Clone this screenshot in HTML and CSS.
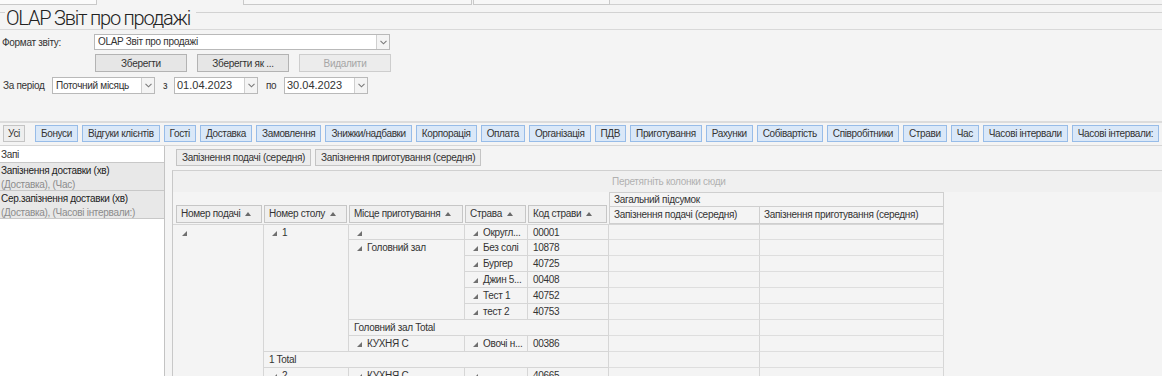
FILE: index.html
```html
<!DOCTYPE html>
<html lang="uk">
<head>
<meta charset="utf-8">
<title>OLAP Звіт про продажі</title>
<link rel="stylesheet" href="styles.css">
</head>
<body>
<div class="doc-tabs">
  <div class="doc-tab dt1"></div>
  <div class="doc-tab dt2"></div>
  <div class="doc-tab dt3"></div>
  <div class="doc-tabs-rest"></div>
</div>

<div class="title-row">
  <div class="title-line lead"></div>
  <div class="title">OLAP Звіт про продажі</div>
  <div class="title-line fill"></div>
</div>

<div class="form">
  <div class="frow frow-format">
    <div class="flabel flabel-format">Формат звіту:</div>
    <div class="combo combo-format">
      <div class="combo-val">OLAP Звіт про продажі</div>
      <div class="combo-arr"><svg width="7" height="5" viewBox="0 0 7 5"><path d="M0.5 0.8 L3.5 3.8 L6.5 0.8" fill="none" stroke="#7a7a7a" stroke-width="1.1"/></svg></div>
    </div>
  </div>
  <div class="frow frow-buttons">
    <button class="btn">Зберегти</button>
    <button class="btn">Зберегти як ...</button>
    <button class="btn btn-disabled">Видалити</button>
  </div>
  <div class="frow frow-period">
    <div class="flabel flabel-period">За період</div>
    <div class="combo combo-period">
      <div class="combo-val">Поточний місяць</div>
      <div class="combo-arr"><svg width="7" height="5" viewBox="0 0 7 5"><path d="M0.5 0.8 L3.5 3.8 L6.5 0.8" fill="none" stroke="#7a7a7a" stroke-width="1.1"/></svg></div>
    </div>
    <div class="flabel flabel-from">з</div>
    <div class="combo combo-date">
      <div class="combo-val date">01.04.2023</div>
      <div class="combo-arr"><svg width="7" height="5" viewBox="0 0 7 5"><path d="M0.5 0.8 L3.5 3.8 L6.5 0.8" fill="none" stroke="#7a7a7a" stroke-width="1.1"/></svg></div>
    </div>
    <div class="flabel flabel-to">по</div>
    <div class="combo combo-date combo-date2">
      <div class="combo-val date">30.04.2023</div>
      <div class="combo-arr"><svg width="7" height="5" viewBox="0 0 7 5"><path d="M0.5 0.8 L3.5 3.8 L6.5 0.8" fill="none" stroke="#7a7a7a" stroke-width="1.1"/></svg></div>
    </div>
  </div>
</div>

<div class="toolbar">
  <button class="tb tb-all">Усі</button>
  <div class="tb-group">
    <button class="tb">Бонуси</button>
    <button class="tb">Відгуки клієнтів</button>
    <button class="tb">Гості</button>
    <button class="tb">Доставка</button>
    <button class="tb">Замовлення</button>
    <button class="tb">Знижки/надбавки</button>
    <button class="tb">Корпорація</button>
    <button class="tb">Оплата</button>
    <button class="tb">Організація</button>
    <button class="tb">ПДВ</button>
    <button class="tb">Приготування</button>
    <button class="tb">Рахунки</button>
    <button class="tb">Собівартість</button>
    <button class="tb">Співробітники</button>
    <button class="tb">Страви</button>
    <button class="tb">Час</button>
    <button class="tb">Часові інтервали</button>
    <button class="tb">Часові інтервали:</button>
  </div>
</div>

<div class="bottom">
  <aside class="fields">
    <div class="field-search">Запі</div>
    <div class="field-item">
      <div class="fi-name">Запізнення доставки (хв)</div>
      <div class="fi-sub">(Доставка), (Час)</div>
    </div>
    <div class="field-item">
      <div class="fi-name">Сер.запізнення доставки (хв)</div>
      <div class="fi-sub">(Доставка), (Часові інтервали:)</div>
    </div>
  </aside>

  <main class="main">
    <div class="data-fields">
      <div class="dfield">Запізнення подачі (середня)</div>
      <div class="dfield">Запізнення приготування (середня)</div>
    </div>
    <div class="pivot-box">
      <div class="drag-area">
        <div class="drag-hint">Перетягніть колонки сюди</div>
      </div>
      <div class="pivot">
        <div class="hcell hfirst">Номер подачі<span class="sort"></span></div>
        <div class="hcell">Номер столу<span class="sort"></span></div>
        <div class="hcell">Місце приготування<span class="sort"></span></div>
        <div class="hcell">Страва<span class="sort"></span></div>
        <div class="hcell">Код страви<span class="sort"></span></div>
        <div class="vh vh-total">Загальний підсумок</div>
        <div class="vh">Запізнення подачі (середня)</div>
        <div class="vh">Запізнення приготування (середня)</div>

        <div class="c rs10 first top"><span class="ex"></span></div>
        <div class="c rs8 top"><span class="ex"></span>1</div>
        <div class="c top"><span class="ex"></span></div>
        <div class="c top"><span class="ex"></span>Округл...</div>
        <div class="c code top">00001</div>
        <div class="v top"></div><div class="v top"></div>

        <div class="c rs5"><span class="ex"></span>Головний зал</div>
        <div class="c"><span class="ex"></span>Без солі</div>
        <div class="c code">10878</div>
        <div class="v"></div><div class="v"></div>

        <div class="c"><span class="ex"></span>Бургер</div>
        <div class="c code">40725</div>
        <div class="v"></div><div class="v"></div>

        <div class="c"><span class="ex"></span>Джин 5...</div>
        <div class="c code">00408</div>
        <div class="v"></div><div class="v"></div>

        <div class="c"><span class="ex"></span>Тест 1</div>
        <div class="c code">40752</div>
        <div class="v"></div><div class="v"></div>

        <div class="c"><span class="ex"></span>тест 2</div>
        <div class="c code">40753</div>
        <div class="v"></div><div class="v"></div>

        <div class="c cs3 total">Головний зал Total</div>
        <div class="v"></div><div class="v"></div>

        <div class="c"><span class="ex"></span>КУХНЯ С</div>
        <div class="c"><span class="ex"></span>Овочі н...</div>
        <div class="c code">00386</div>
        <div class="v"></div><div class="v"></div>

        <div class="c cs4 total">1 Total</div>
        <div class="v"></div><div class="v"></div>

        <div class="c"><span class="ex"></span>2</div>
        <div class="c"><span class="ex"></span>КУХНЯ С</div>
        <div class="c"><span class="ex"></span></div>
        <div class="c code">40665</div>
        <div class="v"></div><div class="v"></div>
      </div>
    </div>
  </main>
</div>
</body>
</html>
```

FILE: styles.css
```css
* { box-sizing: border-box; }

html, body {
  margin: 0;
  padding: 0;
}

body {
  width: 1162px;
  height: 376px;
  overflow: hidden;
  background: #f4f4f4;
  color: #333;
  font-family: "Liberation Sans", Arial, sans-serif;
  font-size: 10px;
  letter-spacing: -0.3px;
}

button {
  font-family: inherit;
  font-size: 10px;
  letter-spacing: -0.3px;
  color: #333;
  margin: 0;
  padding: 0;
  cursor: default;
}

/* document tabs strip at the very top */
.doc-tabs {
  display: flex;
  height: 5px;
}
.doc-tab {
  height: 5px;
  border: 1px solid #c9c9c9;
  border-top: 0;
  background: #f7f7f7;
}
.dt1 { width: 97px; border-left: 0; background: #fbfbfb; }
.dt2 { width: 229px; margin-left: 146px; }
.dt3 { width: 137px; margin-left: 1px; }
.doc-tabs-rest {
  flex: 1;
  border-bottom: 1px solid #d0d0d0;
}

/* title legend */
.title-row {
  display: flex;
  align-items: flex-start;
  height: 25px;
  border-bottom: 1px solid #d9d9d9;
}
.title-line {
  height: 1px;
  margin-top: 7px;
  background: #d2d2d2;
}
.title-line.lead { width: 5px; }
.title-line.fill { flex: 1; }
.title {
  font-family: Roboto, "Liberation Sans", sans-serif;
  font-weight: 300;
  font-size: 20px;
  letter-spacing: -1.2px;
  line-height: 22px;
  color: #222;
  padding: 2px 6px 0 1px;
}

/* form */
.form {
  padding-top: 4px;
}
.frow {
  display: flex;
  align-items: center;
}
.flabel { color: #333; }
.flabel-format { width: 94px; padding-left: 2px; }
.frow-format { height: 16px; }

.combo {
  display: flex;
  height: 16px;
  background: #fff;
  border: 1px solid #b9b9b9;
}
.combo-val {
  flex: 1;
  padding-left: 3px;
  line-height: 14px;
  white-space: nowrap;
  overflow: hidden;
}
.combo-val.date { font-size: 11px; padding-left: 2px; letter-spacing: 0; }
.combo-arr {
  width: 13px;
  border-left: 1px solid #cfcfcf;
  background: #f4f4f4;
  display: flex;
  align-items: center;
  justify-content: center;
}
.combo-format { width: 296px; }

.frow-buttons {
  margin-top: 4px;
  padding-left: 95px;
  gap: 10px;
}
.btn {
  width: 92px;
  height: 18px;
  background: #e6e6e6;
  border: 1px solid #b3b3b3;
}
.btn-disabled {
  color: #a6a6a6;
  border-color: #cdcdcd;
  background: #ececec;
}

.frow-period {
  margin-top: 5px;
  height: 17px;
}
.frow-period .combo { height: 17px; }
.frow-period .combo-val { line-height: 15px; }
.flabel-period { width: 52px; padding-left: 3px; }
.combo-period { width: 103px; }
.flabel-from { width: 19px; padding-left: 8px; }
.combo-date { width: 84px; }
.flabel-to { width: 26px; padding-left: 8px; }

/* toolbar with category buttons */
.toolbar {
  display: flex;
  align-items: center;
  margin-top: 27px;
  border-top: 2px solid #dcdcdc;
  padding: 2px 0 3px 3px;
  border-bottom: 1px solid #d6d6d6;
}
.tb {
  flex: none;
  height: 17px;
  padding: 0 5px;
  background: #dae8f8;
  border: 1px solid #97bce8;
  white-space: nowrap;
  letter-spacing: -0.36px;
}
.tb-all {
  width: 22px;
  padding: 0;
  background: #eeeeee;
  border-color: #c4c4c4;
}
.tb-group {
  flex: none;
  display: flex;
  gap: 4px;
  margin-left: 10px;
}

/* bottom area */
.bottom {
  display: flex;
  height: 230px;
}

.fields {
  width: 165px;
  background: #fff;
  border-right: 1px solid #c3c3c3;
  padding-top: 1px;
}
.field-search {
  height: 16px;
  padding-left: 1px;
  line-height: 15px;
  border-bottom: 1px solid #c8c8c8;
  background: #fff;
}
.field-item {
  height: 28px;
  background: #e8e8e8;
  border-bottom: 1px solid #c8c8c8;
  padding: 1px 0 0 1px;
  line-height: 14px;
}
.fi-name { color: #222; }
.fi-sub { color: #8c8c8c; }

.main {
  flex: 1;
  padding-left: 7px;
  display: flex;
  flex-direction: column;
  min-width: 0;
}
.data-fields {
  flex: none;
  height: 24px;
  display: flex;
  gap: 4px;
  padding: 3px 0 0 4px;
}
.dfield {
  height: 17px;
  line-height: 15px;
  padding: 0 5px;
  background: #ececec;
  border: 1px solid #c4c4c4;
  white-space: nowrap;
}

.pivot-box {
  flex: 1;
  min-height: 0;
  border-left: 1px solid #c8c8c8;
  border-top: 1px solid #d0d0d0;
  background: #f4f4f4;
}

.drag-area {
  display: grid;
  grid-template-columns: 436px 1fr;
  height: 21px;
  background: #f0f0f0;
}
.drag-hint {
  grid-column: 2;
  padding-left: 3px;
  line-height: 22px;
  color: #b0b0b0;
}

.pivot {
  display: grid;
  grid-template-columns: 91px 85px 116px 63px 81px 151px 184px;
  grid-template-rows: 15px 17px repeat(10, 16px);
  width: 771px;
}

.hcell {
  grid-row: span 2;
  align-self: end;
  height: 18px;
  margin: 0 2px 1px 0;
  padding-left: 4px;
  line-height: 16px;
  background: #efefef;
  border: 1px solid #c6c6c6;
  white-space: nowrap;
  display: flex;
  align-items: center;
}
.hcell.hfirst { margin-left: 3px; }
.sort {
  width: 0;
  height: 0;
  margin-left: 5px;
  border-left: 3px solid transparent;
  border-right: 3px solid transparent;
  border-bottom: 4px solid #6a6a6a;
}

.vh {
  border-right: 1px solid #cfcfcf;
  border-bottom: 1px solid #cfcfcf;
  border-top: 1px solid #cfcfcf;
  background: #f4f4f4;
  padding-left: 4px;
  line-height: 15px;
  white-space: nowrap;
}
.vh-total {
  grid-column: span 2;
  line-height: 14px;
  border-left: 1px solid #cfcfcf;
}
.vh-total + .vh { border-left: 1px solid #cfcfcf; border-top: 0; }
.vh-total + .vh + .vh { border-top: 0; }

.c {
  border-right: 1px solid #d6d6d6;
  border-bottom: 1px solid #d6d6d6;
  padding-left: 8px;
  line-height: 15px;
  white-space: nowrap;
  overflow: hidden;
  display: flex;
  align-items: flex-start;
}
.c.first { padding-left: 9px; }
.c.top, .v.top { border-top: 1px solid #d6d6d6; }
.c.code { padding-left: 5px; }
.c.total { padding-left: 5px; }
.rs10 { grid-row: span 10; }
.rs8 { grid-row: span 8; }
.rs5 { grid-row: span 5; }
.cs3 { grid-column: span 3; }
.cs4 { grid-column: span 4; }

.ex {
  flex: none;
  width: 0;
  height: 0;
  margin: 6px 5px 0 0;
  border-left: 5px solid transparent;
  border-bottom: 5px solid #707070;
}

.v {
  border-right: 1px solid #d6d6d6;
  border-bottom: 1px solid #dedede;
}
```
